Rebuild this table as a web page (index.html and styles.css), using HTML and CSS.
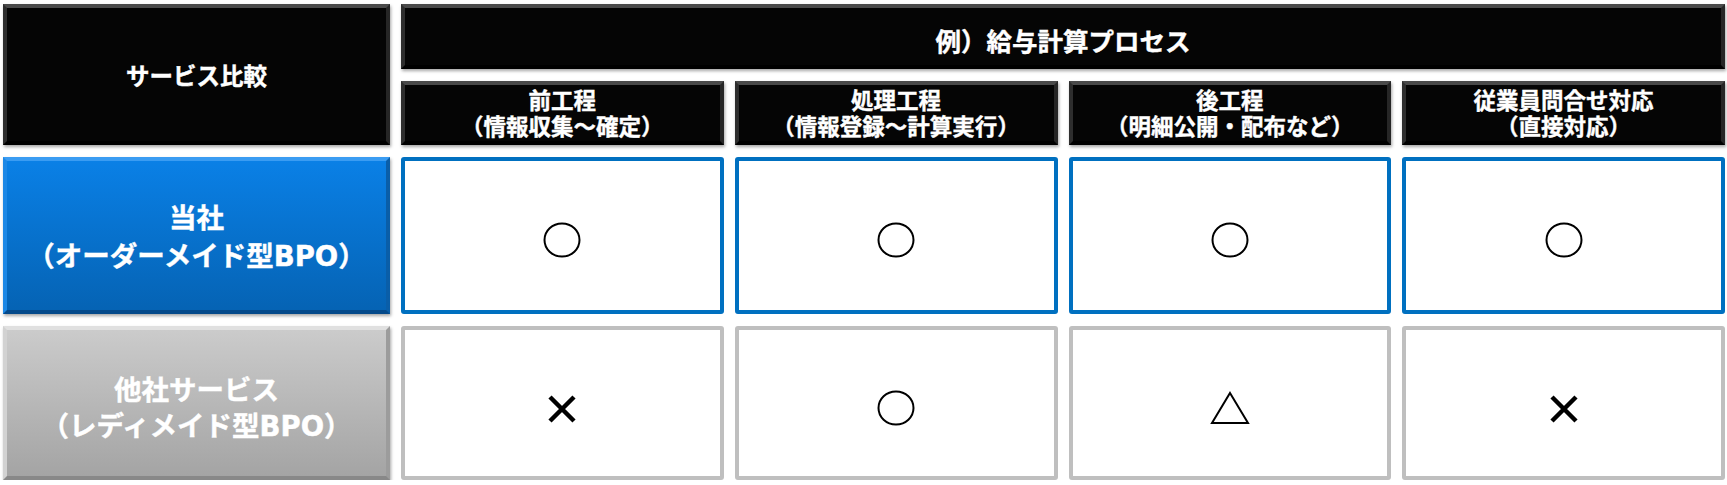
FILE: index.html
```html
<!DOCTYPE html>
<html lang="ja">
<head>
<meta charset="utf-8">
<title>サービス比較</title>
<link rel="stylesheet" href="styles.css">
</head>
<body>
<div class="compare">
  <div class="bevel bevel-black corner">サービス比較</div>
  <div class="bevel bevel-black title">例）給与計算プロセス</div>
  <div class="bevel bevel-black sub">前工程<br>（情報収集～確定）</div>
  <div class="bevel bevel-black sub">処理工程<br>（情報登録～計算実行）</div>
  <div class="bevel bevel-black sub">後工程<br>（明細公開・配布など）</div>
  <div class="bevel bevel-black sub">従業員問合せ対応<br>（直接対応）</div>

  <div class="bevel bevel-blue label">当社<br>（オーダーメイド型BPO）</div>
  <div class="cell cell-blue"><svg class="sym" width="40" height="38" viewBox="0 0 40 38"><ellipse cx="20" cy="19" rx="17.5" ry="16.5" fill="none" stroke="#000" stroke-width="2"/></svg></div>
  <div class="cell cell-blue"><svg class="sym" width="40" height="38" viewBox="0 0 40 38"><ellipse cx="20" cy="19" rx="17.5" ry="16.5" fill="none" stroke="#000" stroke-width="2"/></svg></div>
  <div class="cell cell-blue"><svg class="sym" width="40" height="38" viewBox="0 0 40 38"><ellipse cx="20" cy="19" rx="17.5" ry="16.5" fill="none" stroke="#000" stroke-width="2"/></svg></div>
  <div class="cell cell-blue"><svg class="sym" width="40" height="38" viewBox="0 0 40 38"><ellipse cx="20" cy="19" rx="17.5" ry="16.5" fill="none" stroke="#000" stroke-width="2"/></svg></div>

  <div class="bevel bevel-gray label label-gray">他社サービス<br>（レディメイド型BPO）</div>
  <div class="cell cell-gray"><svg class="sym sym-x" width="30" height="30" viewBox="0 0 30 30"><path d="M3 3 L27 27 M27 3 L3 27" stroke="#000" stroke-width="4.5" fill="none"/></svg></div>
  <div class="cell cell-gray"><svg class="sym" width="40" height="38" viewBox="0 0 40 38"><ellipse cx="20" cy="19" rx="17.5" ry="16.5" fill="none" stroke="#000" stroke-width="2"/></svg></div>
  <div class="cell cell-gray"><svg class="sym" width="40" height="34" viewBox="0 0 40 34"><path d="M20 2 L38 32 L2 32 Z" fill="none" stroke="#000" stroke-width="2" stroke-linejoin="miter"/></svg></div>
  <div class="cell cell-gray"><svg class="sym sym-x" width="30" height="30" viewBox="0 0 30 30"><path d="M3 3 L27 27 M27 3 L3 27" stroke="#000" stroke-width="4.5" fill="none"/></svg></div>
</div>
</body>
</html>
```
FILE: styles.css
```css
html, body {
  margin: 0;
  padding: 0;
  background: #ffffff;
}

body {
  font-family: "DejaVu Sans", "Noto Sans CJK JP", sans-serif;
  font-weight: 700;
}

.compare {
  box-sizing: border-box;
  width: 1727px;
  padding: 4px 2px 0 3px;
  display: grid;
  grid-template-columns: 387px repeat(4, 1fr);
  grid-template-rows: 65px 64px 157px 154px;
  column-gap: 11px;
  row-gap: 12px;
}

.bevel {
  box-sizing: border-box;
  display: flex;
  align-items: center;
  justify-content: center;
  text-align: center;
  color: #ffffff;
  border-style: solid;
  border-width: 4px;
  box-shadow: 1px 2px 3px rgba(0, 0, 0, 0.35);
  -webkit-text-stroke: 0.4px #ffffff;
}

.bevel-black {
  background: #050505;
  border-top-color: #4a4a4a;
  border-left-color: #2e2e2e;
  border-right-color: #262626;
  border-bottom-color: #000000;
}

.bevel-blue {
  background: linear-gradient(#0a80e6, #0563b4);
  border-top-color: #3a9cf2;
  border-left-color: #1c88e6;
  border-right-color: #0a5ea8;
  border-bottom-color: #04498a;
}

.bevel-gray {
  background: linear-gradient(#cbcbcb, #a4a4a4);
  border-top-color: #e0e0e0;
  border-left-color: #d2d2d2;
  border-right-color: #9c9c9c;
  border-bottom-color: #888888;
}

.corner {
  grid-column: 1;
  grid-row: 1 / span 2;
  font-size: 23.5px;
}

.title {
  grid-column: 2 / span 4;
  grid-row: 1;
  font-size: 25.5px;
  padding-top: 6px;
}

.sub {
  font-size: 22.5px;
  line-height: 26.5px;
  padding-top: 2px;
}

.label {
  font-size: 27.5px;
  line-height: 38px;
  padding-top: 2px;
}

.label-gray {
  padding-top: 10px;
  line-height: 36px;
}

.cell {
  box-sizing: border-box;
  display: flex;
  align-items: center;
  justify-content: center;
  background: #ffffff;
  border: 4px solid;
  border-radius: 3px;
  padding-top: 9px;
}

.cell-blue {
  border-color: #0070c0;
}

.cell-gray {
  border-color: #bfbfbf;
}

.sym {
  display: block;
}

.sym-x {
  margin-top: 3px;
}
```
